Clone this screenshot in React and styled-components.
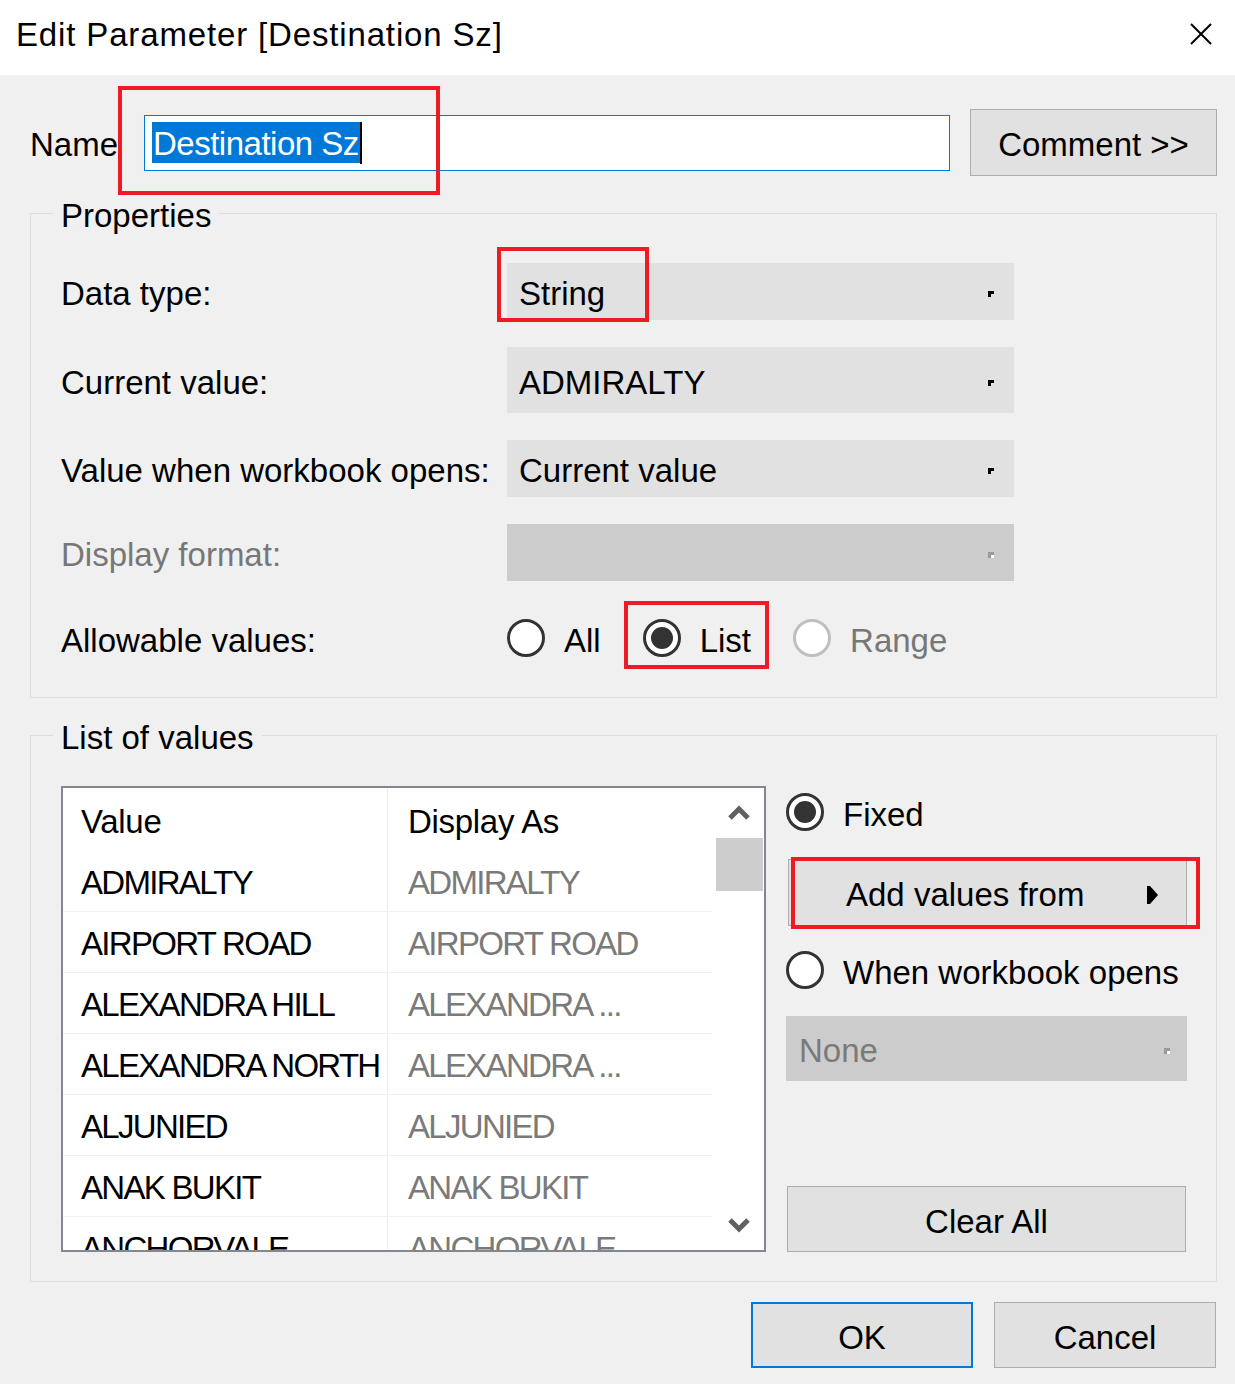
import React from "react";
import styled, { createGlobalStyle } from "styled-components";

const GlobalStyle = createGlobalStyle`
  html, body {
    margin: 0;
    background: #f0f0f0;
  }
  body {
    font-family: "Liberation Sans", Arial, sans-serif;
    color: #000;
  }
`;

const Dialog = styled.div`
  width: 1235px;
  height: 1384px;
  background: #f0f0f0;
  font-size: 33px;
  display: flex;
  flex-direction: column;
`;

const TitleBar = styled.div`
  height: 75px;
  flex-shrink: 0;
  background: #fff;
  display: flex;
  align-items: center;
  justify-content: space-between;
  padding: 0 23px 0 16px;
  box-sizing: border-box;
`;

const Title = styled.div`
  margin-top: -5px;
  letter-spacing: 0.85px;
`;

const CloseBtn = styled.div`
  display: flex;
  margin-top: -8px;
`;

const Body = styled.div`
  padding: 34px 18px 0 30px;
  display: flex;
  flex-direction: column;
`;

const NameRow = styled.div`
  display: flex;
  align-items: center;
  height: 67px;
`;

const NameLabel = styled.div`
  width: 114px;
  padding-top: 5px;
`;

const TextInput = styled.div`
  position: relative;
  flex: 1;
  height: 56px;
  box-sizing: border-box;
  border: 1px solid #0078d7;
  background: #fff;
  display: flex;
  align-items: center;
  padding-left: 7px;
`;

const Selection = styled.span`
  background: #0078d7;
  color: #fff;
  line-height: 38px;
  padding: 3px 1px 0;
  letter-spacing: -0.5px;
`;

const Caret = styled.span`
  width: 2px;
  height: 42px;
  background: #000;
`;

const RedBox = styled.div`
  position: absolute;
  top: ${(p) => p.$top}px;
  left: ${(p) => p.$left}px;
  width: ${(p) => p.$w}px;
  height: ${(p) => p.$h}px;
  border: 4px solid #ed1c24;
  box-sizing: border-box;
  pointer-events: none;
`;

const Button = styled.div`
  position: relative;
  width: ${(p) => p.$w}px;
  height: ${(p) => p.$h}px;
  box-sizing: border-box;
  background: #e1e1e1;
  border: ${(p) => (p.$default ? "2px solid #0078d7" : "1px solid #adadad")};
  display: flex;
  align-items: center;
  justify-content: center;
  flex-shrink: 0;
  padding-top: 5px;
`;

const CommentButton = styled(Button)`
  margin-left: 20px;
`;

const Group = styled.fieldset`
  margin: 17px 0 0;
  border: 1px solid #dcdcdc;
  padding: ${(p) => p.$pad};
  min-width: 0;
`;

const Legend = styled.legend`
  padding: 6px 8px 0;
  margin-left: -8px;
  line-height: 34px;
`;

const PropGrid = styled.div`
  display: grid;
  grid-template-columns: 446px 507px;
  row-gap: 27px;
  align-items: center;
`;

const FieldLabel = styled.div`
  padding-top: 5px;
  color: ${(p) => (p.$disabled ? "#777" : "#000")};
`;

const Select = styled.div`
  position: relative;
  height: ${(p) => p.$h}px;
  box-sizing: border-box;
  background: ${(p) => (p.$disabled ? "#cccccc" : "#e1e1e1")};
  color: ${(p) => (p.$disabled ? "#7a7a7a" : "#000")};
  display: flex;
  align-items: center;
  justify-content: space-between;
  padding: 5px 20px 0 12px;
`;

const RadioGroup = styled.div`
  display: flex;
  align-items: center;
  gap: 42px;
  height: 60px;
`;

const RadioItem = styled.div`
  position: relative;
  display: flex;
  align-items: center;
  gap: 19px;
  height: 38px;
  color: ${(p) => (p.$disabled ? "#777" : "#000")};
`;

const RadioText = styled.span`
  padding-top: 5px;
`;

const RadioCircle = styled.span`
  width: 38px;
  height: 38px;
  box-sizing: border-box;
  border-radius: 50%;
  background: #fff;
  border: 3px solid ${(p) => (p.$disabled ? "#bfbfbf" : "#333")};
  display: flex;
  align-items: center;
  justify-content: center;
  flex-shrink: 0;

  &::after {
    content: "";
    width: 22px;
    height: 22px;
    border-radius: 50%;
    background: #333;
    display: ${(p) => (p.$checked ? "block" : "none")};
  }
`;

const ListArea = styled.div`
  display: flex;
  gap: 20px;
`;

const Table = styled.div`
  width: 706px;
  height: 466px;
  box-sizing: border-box;
  border: 2px solid #828790;
  background: #fff;
  display: flex;
  overflow: hidden;
`;

const Rows = styled.div`
  flex: 1;
  display: flex;
  flex-direction: column;
`;

const Row = styled.div`
  display: flex;
  flex-shrink: 0;
  height: ${(p) => (p.$header ? 63 : 60)}px;
  border-bottom: ${(p) => (p.$header ? "none" : "1px solid #f0f0f0")};
`;

const Cell = styled.div`
  display: flex;
  align-items: center;
  white-space: nowrap;
  overflow: hidden;
  box-sizing: border-box;
  padding-top: 4px;
  width: ${(p) => (p.$first ? "325px" : "auto")};
  flex: ${(p) => (p.$first ? "none" : 1)};
  padding-left: ${(p) => (p.$first ? 18 : 20)}px;
  border-right: ${(p) => (p.$first ? "1px solid #ececec" : "none")};
  color: ${(p) => (p.$muted ? "#7a7a7a" : "#000")};
  letter-spacing: ${(p) => (p.$header ? "-0.3px" : "-1.7px")};
`;

const Scrollbar = styled.div`
  width: 50px;
  flex-shrink: 0;
  margin-left: 2px;
  display: flex;
  flex-direction: column;
  align-items: center;
`;

const ScrollArrow = styled.div`
  height: 50px;
  width: 100%;
  display: flex;
  align-items: center;
  justify-content: center;
  flex-shrink: 0;
`;

const Thumb = styled.div`
  width: 47px;
  height: 53px;
  background: #cdcdcd;
  flex-shrink: 0;
`;

const Spacer = styled.div`
  flex: 1;
`;

const SideColumn = styled.div`
  width: 401px;
  display: flex;
  flex-direction: column;
`;

const SideRadio = styled.div`
  height: 52px;
  display: flex;
  align-items: center;
  margin-top: ${(p) => p.$mt || 0}px;
`;

const SideButton = styled(Button)`
  margin: 21px 0 0 2px;
  justify-content: space-between;
  padding: 5px 27px 0 57px;
`;

const NoneSelect = styled(Select)`
  margin-top: 20px;
  padding: 5px 17px 0 13px;
`;

const ClearButton = styled(Button)`
  margin: auto 0 0 1px;
`;

const Footer = styled.div`
  display: flex;
  justify-content: flex-end;
  gap: 21px;
  margin-top: 20px;
  padding-right: 1px;
`;

const DropDot = ({ disabled }) => (
  <svg width="6" height="6" viewBox="0 0 6 6">
    <polygon points="0,0 6,0 6,3 3,3 3,6 0,6" fill={disabled ? "#9a9a9a" : "#000"} />
    {disabled && <rect x="3" y="3" width="3" height="3" fill="#fff" />}
  </svg>
);

const Chevron = ({ down }) => (
  <svg width="24" height="16" viewBox="0 0 24 16">
    <polyline
      points={down ? "3,3 12,12 21,3" : "3,13 12,4 21,13"}
      fill="none"
      stroke="#606060"
      strokeWidth="5"
    />
  </svg>
);

const rows = [
  ["ADMIRALTY", "ADMIRALTY"],
  ["AIRPORT ROAD", "AIRPORT ROAD"],
  ["ALEXANDRA HILL", "ALEXANDRA ..."],
  ["ALEXANDRA NORTH", "ALEXANDRA ..."],
  ["ALJUNIED", "ALJUNIED"],
  ["ANAK BUKIT", "ANAK BUKIT"],
  ["ANCHORVALE", "ANCHORVALE"],
];

export default function App() {
  return (
    <Dialog>
      <GlobalStyle />
      <TitleBar>
        <Title>Edit Parameter [Destination Sz]</Title>
        <CloseBtn>
          <svg width="22" height="22" viewBox="0 0 22 22">
            <path d="M1 1 L21 21 M21 1 L1 21" stroke="#000" strokeWidth="2" />
          </svg>
        </CloseBtn>
      </TitleBar>

      <Body>
        <NameRow>
          <NameLabel>Name</NameLabel>
          <TextInput>
            <Selection>Destination Sz</Selection>
            <Caret />
            <RedBox $top={-30} $left={-27} $w={322} $h={109} />
          </TextInput>
          <CommentButton $w={247} $h={67}>
            Comment &gt;&gt;
          </CommentButton>
        </NameRow>

        <Group $pad="30px 29px 29px 30px">
          <Legend>Properties</Legend>
          <PropGrid>
            <FieldLabel>Data type:</FieldLabel>
            <Select $h={57}>
              String
              <DropDot />
              <RedBox $top={-16} $left={-10} $w={152} $h={75} />
            </Select>

            <FieldLabel>Current value:</FieldLabel>
            <Select $h={66}>
              ADMIRALTY
              <DropDot />
            </Select>

            <FieldLabel>Value when workbook opens:</FieldLabel>
            <Select $h={57}>
              Current value
              <DropDot />
            </Select>

            <FieldLabel $disabled>Display format:</FieldLabel>
            <Select $h={57} $disabled>
              <span />
              <DropDot disabled />
            </Select>

            <FieldLabel>Allowable values:</FieldLabel>
            <RadioGroup>
              <RadioItem>
                <RadioCircle />
                <RadioText>All</RadioText>
              </RadioItem>
              <RadioItem>
                <RadioCircle $checked />
                <RadioText>List</RadioText>
                <RedBox $top={-18} $left={-19} $w={145} $h={68} />
              </RadioItem>
              <RadioItem $disabled>
                <RadioCircle $disabled />
                <RadioText>Range</RadioText>
              </RadioItem>
            </RadioGroup>
          </PropGrid>
        </Group>

        <Group $pad="31px 29px 29px 30px">
          <Legend>List of values</Legend>
          <ListArea>
            <Table>
              <Rows>
                <Row $header>
                  <Cell $first $header>Value</Cell>
                  <Cell $header>Display As</Cell>
                </Row>
                {rows.map(([value, display]) => (
                  <Row key={value}>
                    <Cell $first>{value}</Cell>
                    <Cell $muted>{display}</Cell>
                  </Row>
                ))}
              </Rows>
              <Scrollbar>
                <ScrollArrow>
                  <Chevron />
                </ScrollArrow>
                <Thumb />
                <Spacer />
                <ScrollArrow>
                  <Chevron down />
                </ScrollArrow>
              </Scrollbar>
            </Table>

            <SideColumn>
              <SideRadio>
                <RadioItem>
                  <RadioCircle $checked />
                  <RadioText>Fixed</RadioText>
                </RadioItem>
              </SideRadio>
              <SideButton $w={399} $h={67}>
                Add values from
                <svg width="12" height="18" viewBox="0 0 12 18">
                  <polygon points="0,0 3,0 11,9 3,18 0,18" fill="#000" />
                </svg>
                <RedBox $top={-3} $left={2} $w={409} $h={72} />
              </SideButton>
              <SideRadio $mt={18}>
                <RadioItem>
                  <RadioCircle />
                  <RadioText>When workbook opens</RadioText>
                </RadioItem>
              </SideRadio>
              <NoneSelect $h={65} $disabled>
                None
                <DropDot disabled />
              </NoneSelect>
              <ClearButton $w={399} $h={66}>
                Clear All
              </ClearButton>
            </SideColumn>
          </ListArea>
        </Group>

        <Footer>
          <Button $w={222} $h={66} $default>
            OK
          </Button>
          <Button $w={222} $h={66}>
            Cancel
          </Button>
        </Footer>
      </Body>
    </Dialog>
  );
}
